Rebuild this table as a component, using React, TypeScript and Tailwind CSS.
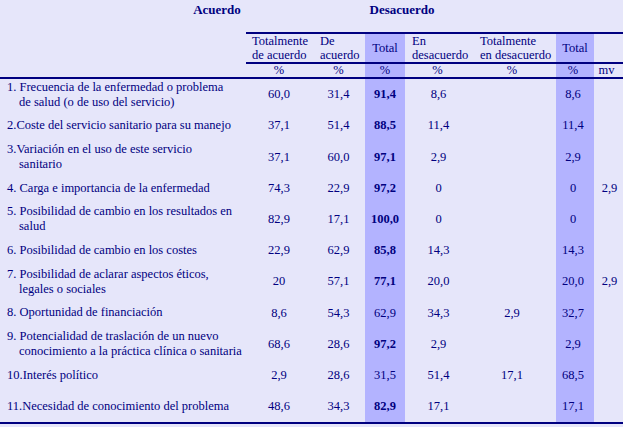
type Row = { label: string[]; v: string[]; bold?: boolean }

const rows: Row[] = [
  { label: ['1. Frecuencia de la enfermedad o problema', 'de salud (o de uso del servicio)'], v: ['60,0', '31,4', '91,4', '8,6', '', '8,6', ''], bold: true },
  { label: ['2.Coste del servicio sanitario para su manejo'], v: ['37,1', '51,4', '88,5', '11,4', '', '11,4', ''], bold: true },
  { label: ['3.Variación en el uso de este servicio', 'sanitario'], v: ['37,1', '60,0', '97,1', '2,9', '', '2,9', ''], bold: true },
  { label: ['4. Carga e importancia de la enfermedad'], v: ['74,3', '22,9', '97,2', '0', '', '0', '2,9'], bold: true },
  { label: ['5. Posibilidad de cambio en los resultados en', 'salud'], v: ['82,9', '17,1', '100,0', '0', '', '0', ''], bold: true },
  { label: ['6. Posibilidad de cambio en los costes'], v: ['22,9', '62,9', '85,8', '14,3', '', '14,3', ''], bold: true },
  { label: ['7. Posibilidad de aclarar aspectos éticos,', 'legales o sociales'], v: ['20', '57,1', '77,1', '20,0', '', '20,0', '2,9'], bold: true },
  { label: ['8. Oportunidad de financiación'], v: ['8,6', '54,3', '62,9', '34,3', '2,9', '32,7', ''] },
  { label: ['9. Potencialidad de traslación de un nuevo', 'conocimiento a la práctica clínica o sanitaria'], v: ['68,6', '28,6', '97,2', '2,9', '', '2,9', ''], bold: true },
  { label: ['10.Interés político'], v: ['2,9', '28,6', '31,5', '51,4', '17,1', '68,5', ''] },
  { label: ['11.Necesidad de conocimiento del problema'], v: ['48,6', '34,3', '82,9', '17,1', '', '17,1', ''], bold: true },
]

const grid = 'grid grid-cols-[246px_70px_49px_40px_71px_80px_38px_29px]'

const Line = ({ full }: { full?: boolean }) => (
  <div className={grid}>
    <div className={full ? 'col-span-8 h-[2px] bg-[#000080]' : 'col-span-7 col-start-2 h-[2px] bg-[#000080]'} />
  </div>
)

export default function App() {
  return (
    <div className="h-[427px] w-[623px] overflow-hidden bg-[#e6e6fa] text-[12.5px] text-[#000080] [font-family:'Liberation_Serif','Times_New_Roman',serif]">
      {/* group titles */}
      <div className="flex h-[32px] pt-[2px] text-[13px] font-bold leading-[15px]">
        <div className="ml-[170px] w-[94px] text-center">Acuerdo</div>
        <div className="ml-[91px] w-[94px] text-center">Desacuerdo</div>
      </div>
      <Line />

      {/* column heads */}
      <div className={`${grid} h-[28px] whitespace-nowrap leading-[14px]`}>
        <div />
        <div className="pl-[6px]">Totalmente<br />de acuerdo</div>
        <div className="pl-[4px]">De<br />acuerdo</div>
        <div className="flex items-center justify-center bg-[#b3b3ff]">Total</div>
        <div className="pl-[7px]">En<br />desacuerdo</div>
        <div className="pl-[4px]">Totalmente<br />en desacuerdo</div>
        <div className="flex items-center justify-center bg-[#b3b3ff]">Total</div>
        <div />
      </div>
      <Line />

      <div className={`${grid} h-[13px] text-center leading-[13px]`}>
        <div />
        <div className="pr-[4px]">%</div>
        <div className="pr-[4px]">%</div>
        <div className="bg-[#b3b3ff]">%</div>
        <div className="pr-[6px]">%</div>
        <div className="pr-[8px]">%</div>
        <div className="bg-[#b3b3ff] pr-[4px]">%</div>
        <div className="pr-[4px]">mv</div>
      </div>
      <Line full />

      {rows.map((r, i) => (
        <div key={i} className={`${grid} h-[31.2px] text-center`}>
          <div className="flex items-center text-left">
            <div className="-indent-[12px] whitespace-nowrap pl-[19px] leading-[15px]">
              {r.label.map((l, j) => (
                <span key={j}>
                  {j > 0 && <br />}
                  {l}
                </span>
              ))}
            </div>
          </div>
          <div className="flex items-center justify-center pr-[4px]">{r.v[0]}</div>
          <div className="flex items-center justify-center pr-[4px]">{r.v[1]}</div>
          <div className={`flex items-center justify-center bg-[#b3b3ff] ${r.bold ? 'font-bold' : ''}`}>{r.v[2]}</div>
          <div className="flex items-center justify-center pr-[4px]">{r.v[3]}</div>
          <div className="flex items-center justify-center pr-[8px]">{r.v[4]}</div>
          <div className="flex items-center justify-center bg-[#b3b3ff] pr-[4px]">{r.v[5]}</div>
          <div className="flex items-center justify-center pl-[2px]">{r.v[6]}</div>
        </div>
      ))}
      <Line full />
    </div>
  )
}
